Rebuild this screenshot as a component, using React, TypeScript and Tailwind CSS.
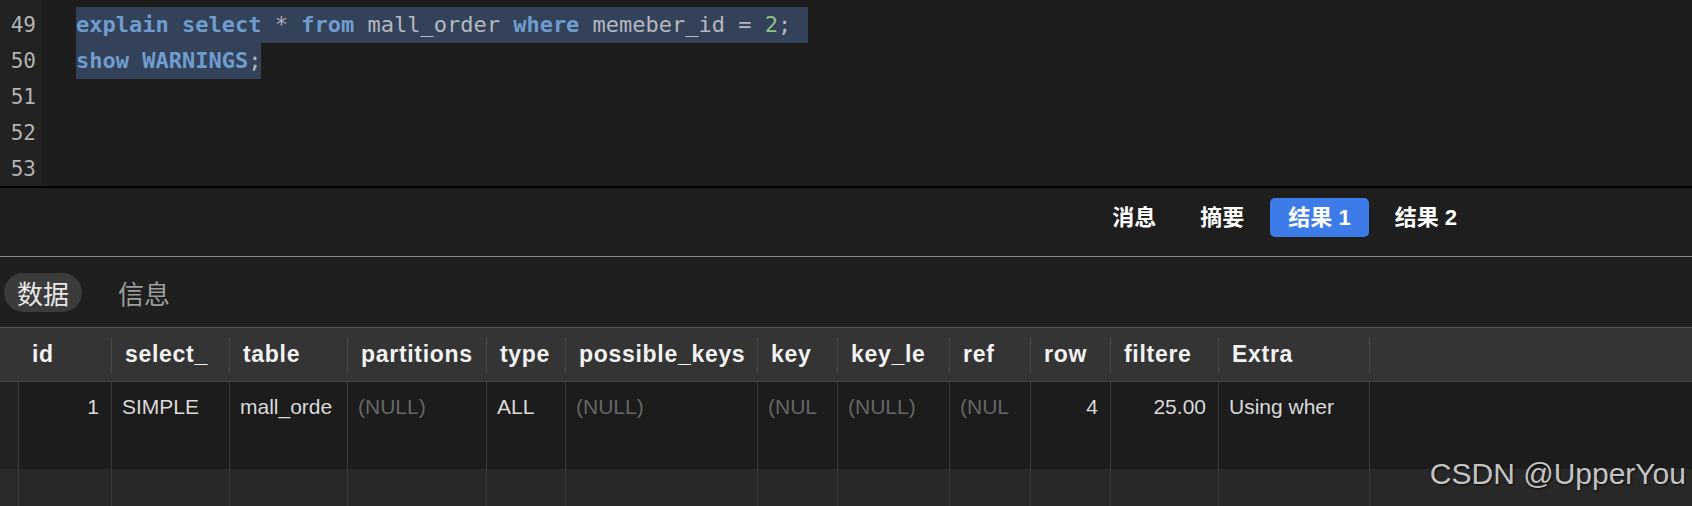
import React from "react";

type Col = { h: string; w: number; v: string; right?: boolean; nul?: boolean };

const cols: Col[] = [
  { h: "id", w: 93, v: "1", right: true },
  { h: "select_", w: 118, v: "SIMPLE" },
  { h: "table", w: 118, v: "mall_orde" },
  { h: "partitions", w: 139, v: "(NULL)", nul: true },
  { h: "type", w: 79, v: "ALL" },
  { h: "possible_keys", w: 192, v: "(NULL)", nul: true },
  { h: "key", w: 80, v: "(NUL", nul: true },
  { h: "key_le", w: 112, v: "(NULL)", nul: true },
  { h: "ref", w: 81, v: "(NUL", nul: true },
  { h: "row", w: 80, v: "4", right: true },
  { h: "filtere", w: 108, v: "25.00", right: true },
  { h: "Extra", w: 151, v: "Using wher" },
];

const K = ({ children }: { children: React.ReactNode }) => (
  <span className="text-[#6f9dcf] font-bold">{children}</span>
);

export default function App() {
  return (
    <div className="relative w-full h-[506px] overflow-hidden bg-[#1e1e1e] flex flex-col">
      {/* Editor */}
      <div className="h-[186px] flex bg-[#1d1d1d] overflow-hidden shrink-0">
        <div className="w-[42px] shrink-0 bg-[#222222] pt-[7px] pr-[6px] text-right font-['DejaVu_Sans_Mono',monospace] text-[21px] leading-[36px] text-[#b2b2b2]">
          {[49, 50, 51, 52, 53].map((n) => (
            <div key={n} className="h-[36px]">
              {n}
            </div>
          ))}
        </div>
        <div className="flex-1 pt-[7px] pl-[34px] font-['DejaVu_Sans_Mono',monospace] text-[22px] leading-[36px] text-[#b3b8c0] whitespace-pre">
          <div className="h-[36px]">
            <span className="inline-block h-[36px] bg-[#344259] pr-[17px]">
              <K>explain</K> <K>select</K> <span className="text-[#a9aeb6]">*</span> <K>from</K> mall_order{" "}
              <K>where</K> memeber_id = <span className="text-[#8fc08a]">2</span>;
            </span>
          </div>
          <div className="h-[36px]">
            <span className="inline-block h-[36px] bg-[#344259]">
              <K>show</K> <K>WARNINGS</K>;
            </span>
          </div>
        </div>
      </div>
      <div className="h-[2px] bg-black shrink-0" />

      {/* Toolbar */}
      <div className="h-[68px] shrink-0 flex justify-end items-start pt-[10px] pr-[217px] gap-[8px] bg-[#1e1e1e] font-['Liberation_Sans','Noto_Sans_CJK_SC',sans-serif] text-[22px] font-semibold text-white">
        <div className="h-[39px] px-[18px] flex items-center rounded-[5px]">消息</div>
        <div className="h-[39px] px-[18px] flex items-center rounded-[5px]">摘要</div>
        <div className="h-[39px] px-[18px] flex items-center rounded-[5px] bg-[#3d7ce8]">结果 1</div>
        <div className="h-[39px] px-[18px] flex items-center rounded-[5px]">结果 2</div>
      </div>
      <div className="h-px bg-[#8c8c8c] shrink-0" />

      {/* Tabs */}
      <div className="h-[70px] shrink-0 flex items-start pt-[16px] pl-[4px] gap-[23px] bg-[#1f1f1f] font-['Noto_Sans_CJK_SC',sans-serif] text-[26px] leading-[39px]">
        <div className="h-[39px] px-[13px] rounded-full bg-[#3b3b3b] text-[#e6e6e6]">数据</div>
        <div className="h-[39px] px-[13px] text-[#9c9c9c]">信息</div>
      </div>
      <div className="h-px bg-[#575757] shrink-0" />

      {/* Table */}
      <div className="flex-1 flex flex-col font-['Liberation_Sans',Arial,sans-serif]">
        {/* Header */}
        <div className="h-[53px] shrink-0 flex bg-[#343434] text-[23px] font-bold tracking-[0.7px] text-[#f2f2f2]">
          <div className="w-[18px] shrink-0" />
          {cols.map((c, i) => (
            <div key={c.h} className="shrink-0 flex items-center" style={{ width: c.w }}>
              <div className={`w-px h-[36px] ${i === 0 ? "bg-transparent" : "bg-[#4a4a4a]"}`} />
              <div className="pl-[13px] whitespace-nowrap overflow-hidden">{c.h}</div>
            </div>
          ))}
          <div className="flex-1 flex items-center">
            <div className="w-px h-[36px] bg-[#4a4a4a]" />
          </div>
        </div>
        <div className="h-px bg-[#474747] shrink-0" />

        {/* Data row */}
        <div className="h-[87px] shrink-0 flex bg-[#1c1c1c] text-[21px] leading-[24px] text-[#dadada]">
          <div className="w-[18px] shrink-0 bg-[#222222]" />
          {cols.map((c) => (
            <div
              key={c.h}
              className={`shrink-0 border-l border-[#3a3a3a] pt-[13px] whitespace-nowrap overflow-hidden ${
                c.right ? "text-right pr-[12px]" : "pl-[10px]"
              } ${c.nul ? "text-[#666666]" : ""}`}
              style={{ width: c.w }}
            >
              {c.v}
            </div>
          ))}
          <div className="flex-1 border-l border-[#3a3a3a]" />
        </div>

        {/* Empty row */}
        <div className="flex-1 flex bg-[#282828]">
          <div className="w-[18px] shrink-0 bg-[#2a2a2a]" />
          {cols.map((c) => (
            <div key={c.h} className="shrink-0 border-l border-[#3a3a3a]" style={{ width: c.w }} />
          ))}
          <div className="flex-1 border-l border-[#3a3a3a]" />
        </div>
      </div>

      {/* Watermark */}
      <div className="absolute right-[6px] top-[459px] font-['Liberation_Sans',Arial,sans-serif] text-[30px] leading-[30px] text-[#c4c4c4] [text-shadow:1px_1px_2px_rgba(0,0,0,0.7)]">
        CSDN @UpperYou
      </div>
    </div>
  );
}
